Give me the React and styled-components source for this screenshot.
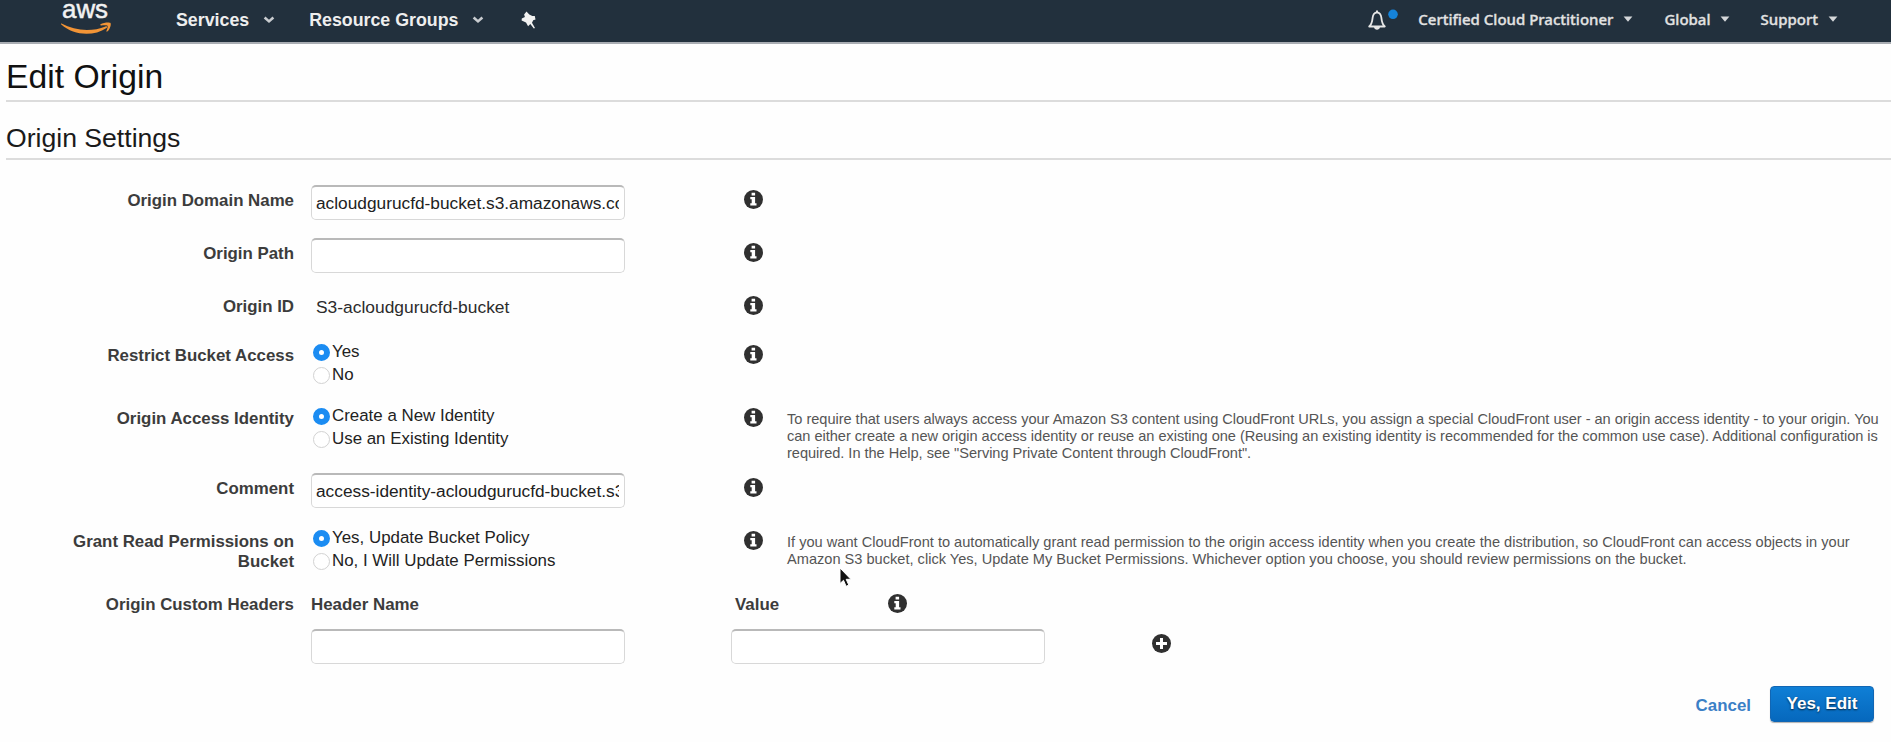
import React from "react";
import styled, { createGlobalStyle } from "styled-components";

const GlobalStyle = createGlobalStyle`
  * { box-sizing: border-box; }
  body { margin: 0; background: #fefefe; font-family: "Liberation Sans", Arial, sans-serif; color: #1c1c1c; }
`;

const Page = styled.div`
  position: relative;
  width: 100%;
  height: 742px;
  overflow: hidden;
`;

const NavBar = styled.header`
  display: flex;
  align-items: flex-start;
  justify-content: space-between;
  height: 44px;
  padding: 0 52px 0 61px;
  background: #22303d;
  border-bottom: 2px solid #a9adb3;
`;

const NavGroup = styled.div`
  display: flex;
  align-items: center;
  height: 40px;
`;

const Logo = styled.svg`
  width: 51px;
  height: 40px;
  margin-right: 64px;
  overflow: visible;
`;

const NavItem = styled.button`
  display: flex;
  align-items: center;
  height: 40px;
  padding: 0;
  border: 0;
  background: none;
  font: bold 17.8px "Liberation Sans", Arial, sans-serif;
  color: #eeeeee;
  margin-right: ${(p) => p.$after}px;
  white-space: nowrap;
`;

const MenuItem = styled(NavItem)`
  font: 500 15px "Noto Sans", sans-serif;
  -webkit-text-stroke: 0.35px #e2e2e2;
  color: #e2e2e2;
  padding-bottom: 2px;
`;

const Chevron = styled.svg`
  width: 12px;
  height: 8px;
  margin-left: ${(p) => p.$gap}px;
`;

const PinIcon = styled.svg`
  width: 17px;
  height: 18px;
`;

const Bell = styled.svg`
  width: 32px;
  height: 24px;
  margin-right: 19px;
`;

const Heading = styled.h1`
  margin: 0 0 0 6px;
  padding: 12px 0 0 0;
  height: 58px;
  font-size: 33.7px;
  line-height: 40px;
  font-weight: 400;
  color: #111;
  border-bottom: 2px solid #dcdcdc;
`;

const SubHeading = styled.h2`
  margin: 0 0 0 6px;
  padding: 19px 0 0 0;
  height: 58px;
  font-size: 26.6px;
  line-height: 34px;
  font-weight: 400;
  color: #1a1a1a;
  border-bottom: 2px solid #dcdcdc;
`;

const Form = styled.form`
  padding-top: 25px;
`;

const Row = styled.div`
  display: grid;
  grid-template-columns: 294px 17px 433px 43px 1fr;
  height: ${(p) => p.$h}px;
`;

const Label = styled.label`
  grid-column: 1;
  padding-top: ${(p) => p.$top ?? 6}px;
  font-size: 16.85px;
  line-height: 20px;
  font-weight: 700;
  text-align: right;
  color: #3c3c3c;
`;

const Field = styled.div`
  grid-column: 3;
  padding-top: ${(p) => p.$top ?? 0}px;
`;

const Help = styled.p`
  margin: 0;
  padding-top: ${(p) => p.$top}px;
  font-size: 14.6px;
  line-height: 16.9px;
  letter-spacing: ${(p) => (p.$tight ? "-0.03px" : "0")};
  color: #555;
  white-space: nowrap;
`;

const TextInput = styled.input`
  display: block;
  width: 314px;
  height: 35px;
  padding: 0 5px 0 4px;
  border: 1.5px solid #d8d8d8;
  border-top: 2px solid #b9b9b9;
  border-radius: 5px;
  background: #fff;
  font: 17.3px "Liberation Sans", Arial, sans-serif;
  color: #222;
  outline: none;
`;

const StaticText = styled.div`
  padding: 6px 0 0 5px;
  font-size: 17.4px;
  line-height: 20px;
  color: #2c2c2c;
`;

const RadioLine = styled.label`
  display: flex;
  align-items: center;
  height: 22.7px;
  padding-left: 2px;
  font-size: 16.9px;
  line-height: 20px;
  color: #222;
`;

const RadioDot = styled.span`
  width: 17px;
  height: 17px;
  margin: 1px 2px 0 0;
  border-radius: 50%;
  border: ${(p) => (p.$on ? "6px solid #1b8cf2" : "1.5px solid #d2d2d2")};
  background: #fff;
`;

const RoundIcon = styled.svg`
  display: block;
  width: 19px;
  height: 19px;
  margin-top: ${(p) => p.$top}px;
`;

const HeadersTitles = styled.div`
  display: flex;
  height: 39px;
`;

const ColumnTitle = styled.div`
  width: ${(p) => p.$w}px;
  padding-top: 5px;
  font-size: 16.9px;
  line-height: 20px;
  font-weight: 700;
  color: #3c3c3c;
`;

const HeadersInputs = styled.div`
  display: flex;
`;

const InputSlot = styled.div`
  width: ${(p) => p.$w}px;
  flex: none;
`;

const Wide = styled.div`
  grid-column: 3 / 6;
`;

const Actions = styled.footer`
  display: flex;
  justify-content: flex-end;
  align-items: center;
  padding: 0 17px 0 0;
  height: 37px;
`;

const Cancel = styled.a`
  margin-right: 19px;
  padding-top: 4px;
  font-size: 16.9px;
  font-weight: 700;
  color: #3b80c6;
`;

const Submit = styled.button`
  width: 104px;
  height: 36px;
  padding: 0;
  border: 1px solid #1166b4;
  border-radius: 4px;
  background: linear-gradient(#0f7fd6, #0668bd);
  box-shadow: 0 1px 1px rgba(0, 0, 0, 0.3);
  font: bold 17px "Liberation Sans", Arial, sans-serif;
  color: #fff;
  text-shadow: 0 1px 2px rgba(0, 0, 0, 0.7);
`;

const Pointer = styled.svg`
  position: absolute;
  left: 839px;
  top: 567px;
  width: 14px;
  height: 21px;
`;

const Info = ({ top = 5 }) => (
  <RoundIcon $top={top} viewBox="0 0 19 19">
    <circle cx="9.5" cy="9.5" r="9.5" fill="#303030" />
    <path d="M7.6 2.8h3.5v2.7H7.6zM6.3 7h4.8v6.3h1.4v2.3H6.3v-2.3h1.4V9.3H6.3z" fill="#fff" />
  </RoundIcon>
);

const Plus = () => (
  <RoundIcon $top={5} viewBox="0 0 19 19">
    <circle cx="9.5" cy="9.5" r="9.5" fill="#303030" />
    <path d="M8 4h3v4h4v3h-4v4H8v-4H4V8h4z" fill="#fff" />
  </RoundIcon>
);

const Angle = ({ gap }) => (
  <Chevron $gap={gap} viewBox="0 0 12 8">
    <path d="M1.6 1.6L6 5.400l4.400-3.800" fill="none" stroke="#c9ccd0" strokeWidth="2.6" />
  </Chevron>
);

const Caret = ({ gap }) => (
  <Chevron $gap={gap} viewBox="0 0 12 8">
    <path d="M1.600 1.600h8.800L6 6.800z" fill="#d5d7da" />
  </Chevron>
);

const Radio = ({ on, children }) => (
  <RadioLine>
    <RadioDot $on={on} />
    {children}
  </RadioLine>
);

export default function App() {
  return (
    <Page>
      <GlobalStyle />
      <NavBar>
        <NavGroup>
          <Logo viewBox="0 0 51 40">
            <text x="1" y="18.300" fontFamily="Liberation Sans, sans-serif" fontWeight="400" fontSize="25.500" textLength="46" lengthAdjust="spacingAndGlyphs" fill="#f2f2f2" stroke="#f2f2f2" strokeWidth="0.5">aws</text>
            <path d="M0.500 23.500C14 31 31 32 44.500 26.400c1.600-.6 2.400.6 1 1.500C33 36.500 13 36 0.300 24.600c-.5-.7-.4-1.300.2-1.100z" fill="#f29436" />
            <path d="M39.500 24.300c2.800-1.800 9-2.300 10-1.300 .9 1.300-.4 6.200-2.900 8.300-.9.700-1.500.2-1.100-.6.900-2 1.500-4 1-4.900-.6-.8-3.800-.8-6.300-.3-.9.100-1.200-.7-.7-1.200z" fill="#f29436" />
          </Logo>
          <NavItem $after={34}>Services<Angle gap={14} /></NavItem>
          <NavItem $after={36}>Resource Groups<Angle gap={14} /></NavItem>
          <PinIcon viewBox="0 0 17 18">
            <path d="M6.500.6l2.800 3 3 1.300 2.500.1.700 3.600-2.300.7-1.200 2.400 3 5.300-1.200.6-3.500-4.600-2.200 2.200-2.100-3.800-4.400-1.900.200-1.900 3.100-1.500-.8-2.700z" fill="#f2f2f2" />
          </PinIcon>
        </NavGroup>
        <NavGroup>
          <Bell viewBox="0 0 32 24">
            <path d="M2.200 18.500c2.900-2.500 3-4.700 3.400-8.600C6 6.400 7.500 4.500 10 4.300c2.500.2 4 2.100 4.400 5.600.4 3.900.5 6.100 3.400 8.600z" fill="none" stroke="#e6e6e6" strokeWidth="1.800" strokeLinejoin="round" />
            <path d="M9 2.500h2v2H9zM7 19h6c-.3 3.500-5.700 3.500-6 0z" fill="#e6e6e6" />
            <circle cx="26" cy="6.300" r="4.800" fill="#1583da" />
          </Bell>
          <MenuItem $after={30}>Certified Cloud Practitioner<Caret gap={9} /></MenuItem>
          <MenuItem $after={29}>Global<Caret gap={9} /></MenuItem>
          <MenuItem $after={0}>Support<Caret gap={9} /></MenuItem>
        </NavGroup>
      </NavBar>

      <Heading>Edit Origin</Heading>
      <SubHeading>Origin Settings</SubHeading>

      <Form>
        <Row $h={53}>
          <Label>Origin Domain Name</Label>
          <Field><TextInput readOnly value="acloudgurucfd-bucket.s3.amazonaws.com" /></Field>
          <Info />
        </Row>
        <Row $h={53}>
          <Label>Origin Path</Label>
          <Field><TextInput readOnly value="" /></Field>
          <Info />
        </Row>
        <Row $h={50}>
          <Label>Origin ID</Label>
          <Field><StaticText>S3-acloudgurucfd-bucket</StaticText></Field>
          <Info />
        </Row>
        <Row $h={63}>
          <Label $top={5}>Restrict Bucket Access</Label>
          <Field><Radio on>Yes</Radio><Radio>No</Radio></Field>
          <Info top={4} />
        </Row>
        <Row $h={69}>
          <Label $top={5}>Origin Access Identity</Label>
          <Field $top={1}><Radio on>Create a New Identity</Radio><Radio>Use an Existing Identity</Radio></Field>
          <Info top={4} />
          <Help $top={7} $tight>
            To require that users always access your Amazon S3 content using CloudFront URLs, you assign a special CloudFront user - an origin access identity - to your origin. You<br />
            can either create a new origin access identity or reuse an existing one (Reusing an existing identity is recommended for the common use case). Additional configuration is<br />
            required. In the Help, see "Serving Private Content through CloudFront".
          </Help>
        </Row>
        <Row $h={54}>
          <Label>Comment</Label>
          <Field><TextInput readOnly value="access-identity-acloudgurucfd-bucket.s3.amazonaws.com" /></Field>
          <Info />
        </Row>
        <Row $h={63}>
          <Label $top={5}>Grant Read Permissions on<br />Bucket</Label>
          <Field><Radio on>Yes, Update Bucket Policy</Radio><Radio>No, I Will Update Permissions</Radio></Field>
          <Info top={4} />
          <Help $top={7}>
            If you want CloudFront to automatically grant read permission to the origin access identity when you create the distribution, so CloudFront can access objects in your<br />
            Amazon S3 bucket, click Yes, Update My Bucket Permissions. Whichever option you choose, you should review permissions on the bucket.
          </Help>
        </Row>
        <Row $h={95}>
          <Label $top={5}>Origin Custom Headers</Label>
          <Wide>
            <HeadersTitles>
              <ColumnTitle $w={424}>Header Name</ColumnTitle>
              <ColumnTitle $w={153}>Value</ColumnTitle>
              <Info top={4} />
            </HeadersTitles>
            <HeadersInputs>
              <InputSlot $w={420}><TextInput readOnly value="" /></InputSlot>
              <InputSlot $w={421}><TextInput readOnly value="" /></InputSlot>
              <Plus />
            </HeadersInputs>
          </Wide>
        </Row>
        <Actions>
          <Cancel>Cancel</Cancel>
          <Submit type="button">Yes, Edit</Submit>
        </Actions>
      </Form>
      <Pointer viewBox="0 0 14 21">
        <path d="M1 1v15.500l3.500-3.200 2.600 6 2.700-1.200-2.600-5.800h4.700z" fill="#111" stroke="#fff" strokeWidth="1" />
      </Pointer>
    </Page>
  );
}
